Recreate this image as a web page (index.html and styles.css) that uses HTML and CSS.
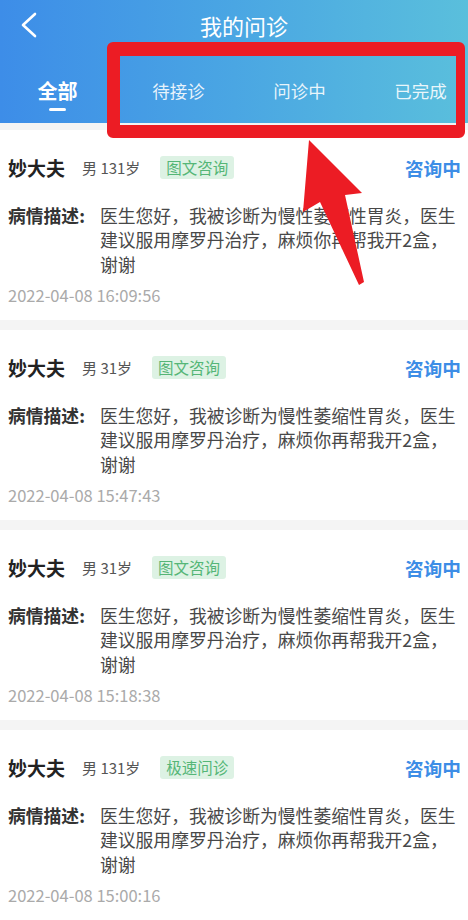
FILE: index.html
```html
<!DOCTYPE html>
<html lang="zh-CN">
<head>
<meta charset="utf-8">
<title>我的问诊</title>
<link rel="stylesheet" href="styles.css">
</head>
<body>
<div class="page">
  <header class="header">
    <div class="topbar">
      <svg class="back" width="20" height="26" viewBox="0 0 20 26"><polyline points="15,2 3,13 15,24" fill="none" stroke="#fff" stroke-width="2.6" stroke-linecap="round" stroke-linejoin="round"/></svg>
      <h1 class="title">我的问诊</h1>
    </div>
    <nav class="tabs">
      <div class="tab active">全部</div>
      <div class="tab">待接诊</div>
      <div class="tab">问诊中</div>
      <div class="tab">已完成</div>
    </nav>
  </header>

  <main class="list">
    <section class="card">
      <div class="row">
        <span class="name">妙大夫</span>
        <span class="meta">男 131岁</span>
        <span class="tag">图文咨询</span>
        <span class="status">咨询中</span>
      </div>
      <div class="desc">
        <span class="label">病情描述:</span>
        <p class="text">医生您好，我被诊断为慢性萎缩性胃炎，医生建议服用摩罗丹治疗，麻烦你再帮我开2盒，谢谢</p>
      </div>
      <div class="date">2022-04-08 16:09:56</div>
    </section>
    <section class="card">
      <div class="row">
        <span class="name">妙大夫</span>
        <span class="meta">男 31岁</span>
        <span class="tag">图文咨询</span>
        <span class="status">咨询中</span>
      </div>
      <div class="desc">
        <span class="label">病情描述:</span>
        <p class="text">医生您好，我被诊断为慢性萎缩性胃炎，医生建议服用摩罗丹治疗，麻烦你再帮我开2盒，谢谢</p>
      </div>
      <div class="date">2022-04-08 15:47:43</div>
    </section>
    <section class="card">
      <div class="row">
        <span class="name">妙大夫</span>
        <span class="meta">男 31岁</span>
        <span class="tag">图文咨询</span>
        <span class="status">咨询中</span>
      </div>
      <div class="desc">
        <span class="label">病情描述:</span>
        <p class="text">医生您好，我被诊断为慢性萎缩性胃炎，医生建议服用摩罗丹治疗，麻烦你再帮我开2盒，谢谢</p>
      </div>
      <div class="date">2022-04-08 15:18:38</div>
    </section>
    <section class="card">
      <div class="row">
        <span class="name">妙大夫</span>
        <span class="meta">男 131岁</span>
        <span class="tag">极速问诊</span>
        <span class="status">咨询中</span>
      </div>
      <div class="desc">
        <span class="label">病情描述:</span>
        <p class="text">医生您好，我被诊断为慢性萎缩性胃炎，医生建议服用摩罗丹治疗，麻烦你再帮我开2盒，谢谢</p>
      </div>
      <div class="date">2022-04-08 15:00:16</div>
    </section>
  </main>

  <svg class="annot" width="468" height="300" viewBox="0 0 468 300">
    <path d="M113 42 H459 A6 6 0 0 1 465 48 V132 A6 6 0 0 1 459 138 H113 A6 6 0 0 1 107 132 V48 A6 6 0 0 1 113 42 Z M120 56 V125 H456 V56 Z" fill="#ec1c24" fill-rule="evenodd"/>
    <polygon points="309,140 362,193 345,195 364,282 359,285 320,202 303,212" fill="#ec1c24"/>
  </svg>
</div>
</body>
</html>
```

FILE: styles.css
```css
* { box-sizing: border-box; }
html, body { margin: 0; padding: 0; }
body {
  width: 468px;
  height: 920px;
  overflow: hidden;
  background: #f4f4f4;
  font-family: "Noto Sans CJK SC", "Noto Sans", sans-serif;
}
.page { position: relative; width: 468px; height: 920px; overflow: hidden; }

.header {
  height: 123px;
  background: linear-gradient(90deg, #3d8de8 0%, #4aa6e3 50%, #5abfdc 100%);
  color: #fff;
}
.topbar {
  height: 50px;
  display: flex;
  align-items: center;
  padding-left: 20px;
}
.back { flex: 0 0 auto; }
.title {
  flex: 1;
  margin: 0 0 0 -20px;
  padding-left: 10px;
  text-align: center;
  font-size: 22px;
  font-weight: 400;
  line-height: 50px;
  transform: translateX(-5px);
}
.tabs {
  display: flex;
  height: 73px;
  margin-left: -3px;
}
.tab {
  flex: 0 0 121px;
  text-align: center;
  font-size: 17.5px;
  line-height: 24px;
  padding-top: 29px;
  color: rgba(255,255,255,0.88);
}
.tab.active {
  font-size: 20px;
  font-weight: 700;
  color: #fff;
}
.tab.active::after {
  content: "";
  display: block;
  width: 17px;
  height: 3px;
  border-radius: 2px;
  background: #fff;
  margin: 5px auto 0;
}

.list {
  display: flex;
  flex-direction: column;
  gap: 10px;
  padding-top: 7px;
}
.card {
  background: #fff;
  height: 190px;
  padding: 22px 7px 0 8px;
}
.row {
  display: flex;
  align-items: center;
  height: 30px;
}
.name {
  font-size: 19px;
  font-weight: 700;
  color: #222;
}
.meta {
  margin-left: 17px;
  font-size: 15px;
  color: #555;
}
.tag {
  margin-left: 20px;
  height: 23px;
  line-height: 23px;
  padding: 0 6px;
  background: #ddf2e4;
  color: #55b677;
  font-size: 15.5px;
  border-radius: 3px;
}
.status {
  margin-left: auto;
  font-size: 18.7px;
  font-weight: 700;
  color: #3d8de6;
}
.desc {
  display: flex;
  margin-top: 20.75px;
}
.label {
  flex: 0 0 92px;
  font-size: 17.8px;
  font-weight: 700;
  color: #333;
  line-height: 24.5px;
}
.text {
  flex: 1;
  margin: 0;
  font-size: 17.8px;
  line-height: 24.5px;
  color: #484848;
}
.date {
  margin-top: 8px;
  font-size: 16.5px;
  line-height: 22px;
  color: #aaa;
}

.annot {
  position: absolute;
  left: 0;
  top: 0;
  pointer-events: none;
}
```
